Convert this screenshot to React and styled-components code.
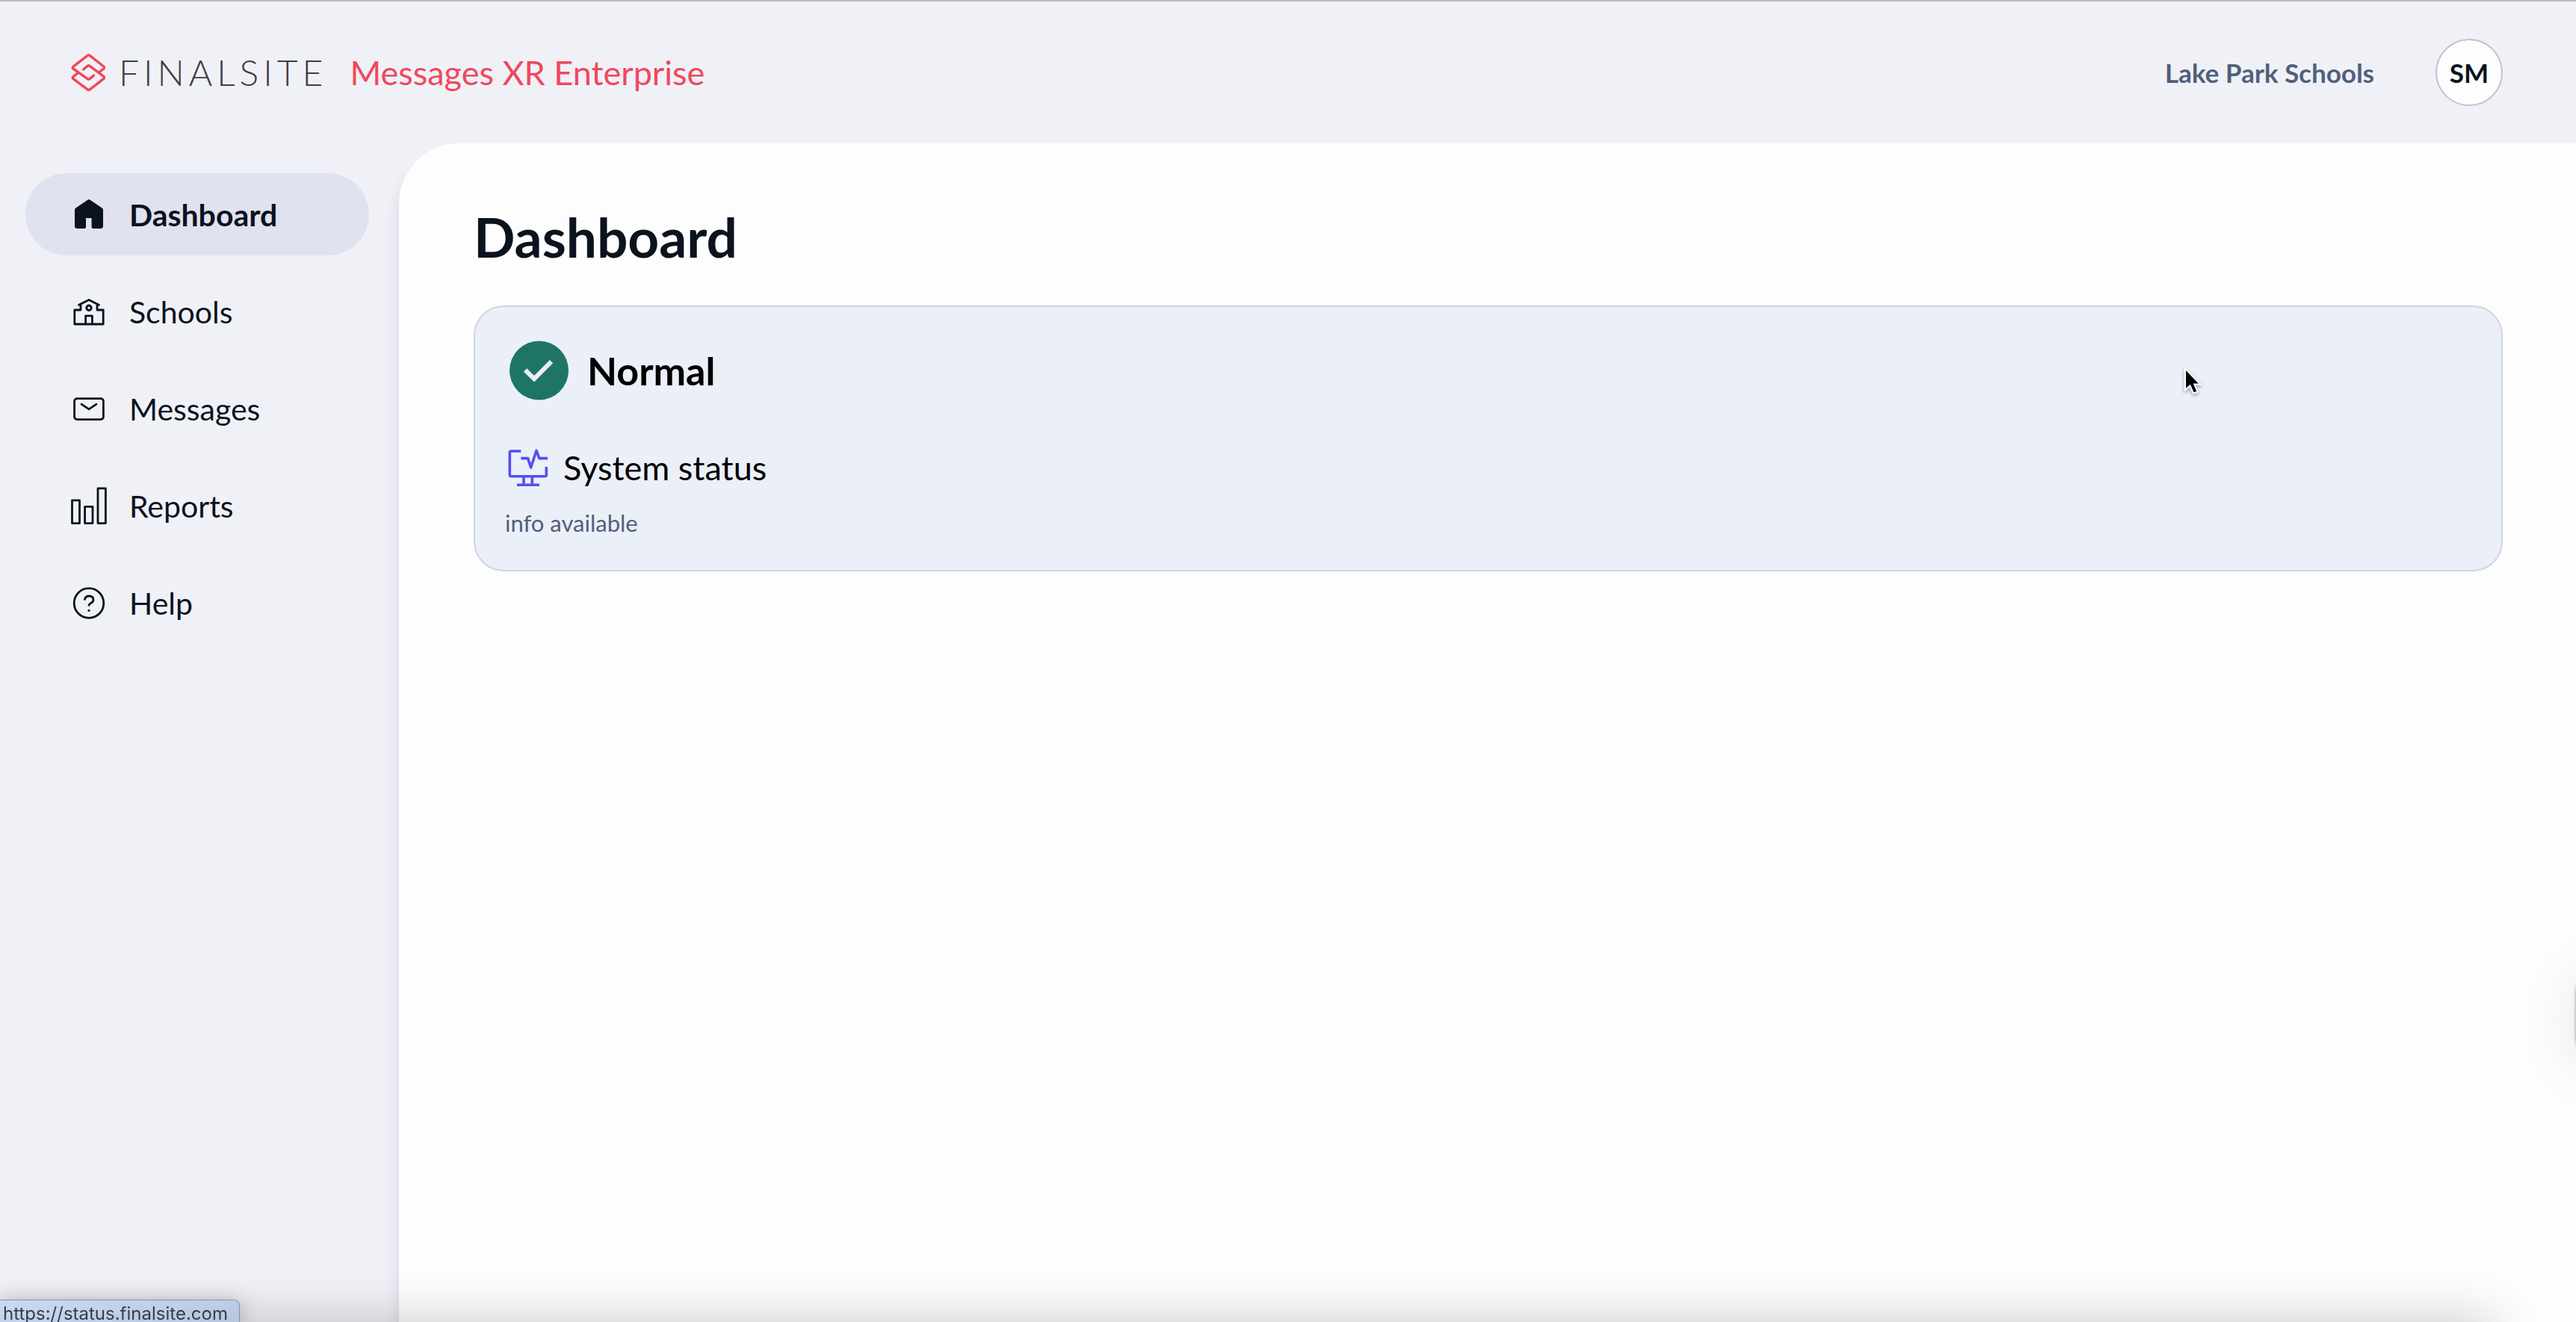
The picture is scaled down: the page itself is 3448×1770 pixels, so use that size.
import React from "react";
import styled, { createGlobalStyle } from "styled-components";

const LogoMark = () => (
  <svg width="48" height="54" viewBox="0 0 48 54" aria-hidden="true">
    <g
      fill="none"
      stroke="#f0485c"
      strokeWidth="3.4"
      strokeLinecap="round"
      strokeLinejoin="round"
    >
      <path d="M31.5 31 26 35.6Q24.7 36.8 23.2 35.7L4 22Q2.4 20.6 4 19.2L23.2 4.4Q24.7 3 26.2 4.4L44.8 19Q46.4 20.5 44.8 22L38 27" />
      <path d="M17.5 23 23.2 18.4Q24.7 17.2 26.2 18.3L44.8 32.4Q46.4 34 44.8 35.4L26.2 49.8Q24.7 51 23.2 49.8L4 35.4Q2.4 34 4 32.6L11 27.2" />
    </g>
  </svg>
);

const NavSvg = ({ children }) => (
  <svg
    width="48"
    height="52"
    viewBox="0 0 48 52"
    fill="none"
    stroke="#0b131e"
    strokeWidth="2.8"
    strokeLinecap="round"
    strokeLinejoin="round"
    aria-hidden="true"
  >
    {children}
  </svg>
);

const HomeIcon = () => (
  <NavSvg>
    <path
      fill="#0b131e"
      stroke="none"
      d="M22.6 6.6Q24 5.4 25.4 6.6L41.6 17.4Q43 18.4 43 20V41.5Q43 45 39.5 45H30.5Q27.6 45 27.6 42.4V31H20V42.4Q20 45 17.2 45H8.5Q5 45 5 41.5V20Q5 18.4 6.4 17.4Z"
    />
  </NavSvg>
);

const SchoolIcon = () => (
  <NavSvg>
    <path d="M10.5 17.2 24 10.6 37.5 17.2M13 16.5V24H4.8V43H43.2V24H35V16.5" />
    <circle cx="24" cy="21.3" r="3.2" strokeWidth="3" />
    <path d="M19.6 43V31.8H28.4V43" />
  </NavSvg>
);

const MailIcon = () => (
  <NavSvg>
    <rect x="4.6" y="12.6" width="38.8" height="28" rx="3.5" />
    <path d="M14 20.2 24 26.8 34 20.2" />
  </NavSvg>
);

const ReportsIcon = () => (
  <NavSvg>
    <rect x="1.5" y="18.8" width="10" height="30.8" />
    <rect x="18.6" y="27.4" width="10.4" height="22.2" />
    <rect x="36" y="2.8" width="10.4" height="46.8" />
  </NavSvg>
);

const HelpIcon = () => (
  <NavSvg>
    <circle cx="24" cy="26.5" r="19.8" />
    <path d="M18.4 21.6C19 18.6 21.2 17 24.4 17C28 17 30 19.2 30 22.2C30 26.4 24.4 26.4 24 29.4" />
    <circle cx="24" cy="36.4" r="1" strokeWidth="1.4" />
  </NavSvg>
);

const CheckIcon = () => (
  <svg width="80" height="80" viewBox="0 0 80 80" aria-hidden="true">
    <circle cx="39.5" cy="40" r="39.5" fill="#1e7566" />
    <path
      d="M21 39.5 33 51.2 56 28.2"
      fill="none"
      stroke="#e9eef5"
      strokeWidth="6"
    />
  </svg>
);

const MonitorIcon = () => (
  <svg width="54" height="52" viewBox="0 0 54 52" aria-hidden="true">
    <g fill="none" stroke="#574ff0" strokeWidth="3.6" strokeLinejoin="round">
      <path d="M17.3 4H4.3Q2.3 4 2.3 6V35.8Q2.3 37.8 4.3 37.8H49.3Q51.3 37.8 51.3 35.8V25" />
      <path d="M17.3 13.6H26.6L30.6 26 38 3.2 41.8 13.6H53" />
      <path d="M21 38V49M32.3 38V49M12 49.3H42" />
    </g>
  </svg>
);

const links = [
  { id: 1, text: "Dashboard", url: "#dashboard", icon: <HomeIcon />, active: true },
  { id: 2, text: "Schools", url: "#schools", icon: <SchoolIcon /> },
  { id: 3, text: "Messages", url: "#messages", icon: <MailIcon /> },
  { id: 4, text: "Reports", url: "#reports", icon: <ReportsIcon /> },
  { id: 5, text: "Help", url: "#help", icon: <HelpIcon /> },
];

const App = () => {
  return (
    <>
      <GlobalStyle />
      <Page>
        <Header>
          <Brand href="#home">
            <LogoMark />
            <Wordmark>FINALSITE</Wordmark>
            <Product>Messages XR Enterprise</Product>
          </Brand>
          <Account>
            <District>Lake Park Schools</District>
            <Avatar type="button">SM</Avatar>
          </Account>
        </Header>
        <Body>
          <Sidebar>
            {links.map(({ id, text, url, icon, active }) => (
              <NavLink key={id} href={url} $active={active}>
                {icon}
                {text}
              </NavLink>
            ))}
          </Sidebar>
          <Main>
            <Title>Dashboard</Title>
            <StatusCard>
              <StatusRow>
                <CheckIcon />
                <StatusLabel>Normal</StatusLabel>
              </StatusRow>
              <SystemLink href="https://status.finalsite.com">
                <MonitorIcon />
                System status
              </SystemLink>
              <Info>info available</Info>
              <Pointer width="28" height="40" viewBox="0 0 30 42" aria-hidden="true">
                <path
                  d="M3 2V33L10 27 15 38 21 35.4 16.4 25H25Z"
                  fill="#000"
                  stroke="#fff"
                  strokeWidth="2.4"
                />
              </Pointer>
            </StatusCard>
          </Main>
        </Body>
        <BottomShade />
        <SideShade />
        <LinkPreview>https://status.finalsite.com</LinkPreview>
      </Page>
    </>
  );
};

const GlobalStyle = createGlobalStyle`
  * {
    box-sizing: border-box;
  }
  body {
    margin: 0;
    background: #f0f1f7;
    color: #0b131e;
    font-family: Lato, "Open Sans", sans-serif;
  }
`;

const Page = styled.div`
  display: flex;
  flex-direction: column;
  min-height: 100vh;
  border-top: 2px solid #bcbcc2;
`;

const Header = styled.header`
  display: flex;
  align-items: center;
  justify-content: space-between;
  height: 190px;
  padding: 0 98px 0 94px;
`;

const Brand = styled.a`
  display: flex;
  align-items: center;
  text-decoration: none;
`;

const Wordmark = styled.span`
  margin-left: 17px;
  font-size: 48px;
  font-weight: 300;
  letter-spacing: 6px;
  line-height: 54px;
  color: #3c3f44;
`;

const Product = styled.span`
  margin-left: 30px;
  font-size: 45px;
  color: #f0485c;
`;

const Account = styled.div`
  display: flex;
  align-items: center;
  gap: 82px;
`;

const District = styled.span`
  font-size: 35px;
  font-weight: 700;
  color: #50607a;
`;

const Avatar = styled.button`
  width: 90px;
  height: 90px;
  padding: 0;
  border: 2px solid #c0c5cd;
  border-radius: 50%;
  background: #fdfdfe;
  color: #0b131e;
  font-family: inherit;
  font-size: 35px;
  font-weight: 700;
`;

const Body = styled.div`
  display: flex;
  flex: 1;
`;

const Sidebar = styled.nav`
  display: flex;
  flex-direction: column;
  flex: 0 0 534px;
  gap: 20px;
  padding: 40px 40px 0 34px;
`;

const NavLink = styled.a`
  display: flex;
  align-items: center;
  gap: 30px;
  height: 110px;
  padding-left: 61px;
  border-radius: 55px;
  background: ${({ $active }) => ($active ? "#e0e2ef" : "transparent")};
  color: #0b131e;
  font-size: 41px;
  font-weight: ${({ $active }) => ($active ? 700 : 400)};
  text-decoration: none;
`;

const Main = styled.main`
  flex: 1;
  padding: 80px 98px 80px 100px;
  border-top-left-radius: 80px;
  background: #fdfdfe;
  box-shadow: -4px 16px 16px rgba(60, 60, 110, 0.1);
`;

const Title = styled.h1`
  margin: 0 0 47px;
  font-size: 73px;
  font-weight: 700;
  line-height: 90px;
`;

const StatusCard = styled.section`
  position: relative;
  padding: 45px 40px;
  border: 2px solid #d0d5de;
  border-radius: 40px;
  background: #ebeff8;
  color: #000;
`;

const StatusRow = styled.div`
  display: flex;
  align-items: center;
  gap: 24px;
  margin-bottom: 60px;
  padding-left: 6px;
`;

const StatusLabel = styled.h2`
  margin: 0;
  font-size: 52px;
  font-weight: 700;
  line-height: 60px;
`;

const SystemLink = styled.a`
  display: flex;
  align-items: center;
  gap: 20px;
  width: fit-content;
  height: 60px;
  padding-left: 4px;
  color: #000;
  font-size: 45px;
  line-height: 54px;
  text-decoration: none;
`;

const Info = styled.p`
  margin: 26px 0 0;
  color: #50607a;
  font-size: 31px;
  line-height: 36px;
`;

const Pointer = styled.svg`
  position: absolute;
  top: 80px;
  right: 398px;
  filter: drop-shadow(0 2px 2px rgba(0, 0, 0, 0.35));
`;

const BottomShade = styled.div`
  position: fixed;
  right: 120px;
  bottom: -50px;
  left: 0;
  height: 40px;
  box-shadow: 0 0 70px 8px rgba(0, 0, 0, 0.24);
`;

const SideShade = styled.div`
  position: fixed;
  top: 1300px;
  right: -120px;
  width: 120px;
  height: 120px;
  border-radius: 30px;
  box-shadow: 0 8px 80px rgba(0, 0, 0, 0.1), 0 0 4px rgba(0, 0, 0, 0.4);
`;

const LinkPreview = styled.div`
  position: fixed;
  bottom: 0;
  left: 0;
  padding: 6px 15px 0 4px;
  border-top: 1px solid #8d93a0;
  border-right: 1px solid #8d93a0;
  border-top-right-radius: 8px;
  background: linear-gradient(170deg, #c8daf6, #b7c6e1);
  box-shadow: 0 4px 28px rgba(0, 0, 0, 0.28);
  color: #3a3d42;
  font-family: Inter, sans-serif;
  font-size: 24px;
  line-height: 23px;
`;

export default App;
